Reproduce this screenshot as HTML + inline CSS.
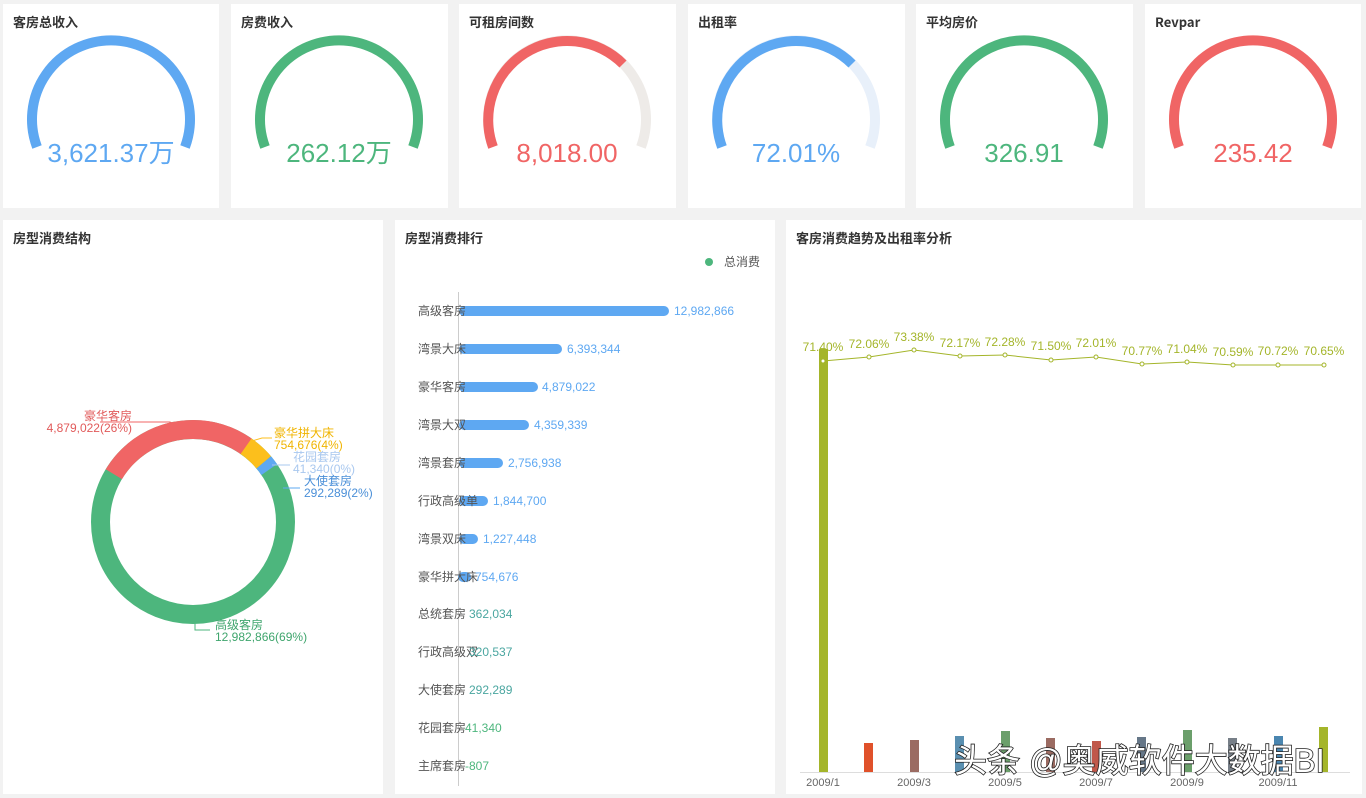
<!DOCTYPE html>
<html><head><meta charset="utf-8"><style>
body{margin:0;width:1366px;height:798px;background:#f2f2f2;font-family:"Liberation Sans","Noto Sans CJK SC",sans-serif;overflow:hidden;position:relative}
.c{position:absolute;background:#fff}
.t{position:absolute;left:10px;top:8px;height:20px;line-height:20px;font-size:13px;font-weight:bold;color:#333;font-family:"Noto Sans CJK SC",sans-serif}
svg{position:absolute;left:0;top:0}
</style></head><body>
<div class="c" style="left:3px;top:4px;width:216px;height:204px"><div class="t">客房总收入</div></div>
<div class="c" style="left:231px;top:4px;width:217px;height:204px"><div class="t">房费收入</div></div>
<div class="c" style="left:459px;top:4px;width:217px;height:204px"><div class="t">可租房间数</div></div>
<div class="c" style="left:688px;top:4px;width:217px;height:204px"><div class="t">出租率</div></div>
<div class="c" style="left:916px;top:4px;width:217px;height:204px"><div class="t">平均房价</div></div>
<div class="c" style="left:1145px;top:4px;width:216px;height:204px"><div class="t">Revpar</div></div>
<div class="c" style="left:3px;top:220px;width:380px;height:574px"><div class="t">房型消费结构</div></div>
<div class="c" style="left:395px;top:220px;width:380px;height:574px"><div class="t">房型消费排行</div></div>
<div class="c" style="left:786px;top:220px;width:576px;height:574px"><div class="t">客房消费趋势及出租率分析</div></div>

<svg width="1366" height="798" font-family="Liberation Sans, Noto Sans CJK SC, sans-serif">
<g fill="none" stroke-width="10">
<path d="M37 147 A79 79 0 1 1 185 147" stroke="#5ea8f2"/>
<path d="M265 147 A79 79 0 1 1 413 147" stroke="#4db67d"/>
<path d="M493 147 A79 79 0 1 1 641 147" stroke="#eeebe8"/>
<path d="M493 147 A79 79 0 0 1 623 64" stroke="#f06565"/>
<path d="M722 147 A79 79 0 1 1 870 147" stroke="#e8f0fa"/>
<path d="M722 147 A79 79 0 0 1 852 64" stroke="#5ea8f2"/>
<path d="M950 147 A79 79 0 1 1 1098 147" stroke="#4db67d"/>
<path d="M1179 147 A79 79 0 1 1 1327 147" stroke="#f06565"/>
</g>
<g font-size="26" text-anchor="middle">
<text x="111" y="162" fill="#5ea8f2">3,621.37万</text>
<text x="339" y="162" fill="#4db67d">262.12万</text>
<text x="567" y="162" fill="#f06565">8,018.00</text>
<text x="796" y="162" fill="#5ea8f2">72.01%</text>
<text x="1024" y="162" fill="#4db67d">326.91</text>
<text x="1253" y="162" fill="#f06565">235.42</text>
</g>

<g transform="rotate(-90 193 522)" fill="none" stroke-width="19">
<circle cx="193" cy="522" r="92.5" stroke="#4db67d"/>
<circle cx="193" cy="522" r="92.5" stroke="#f06565" stroke-dasharray="151 1000" stroke-dashoffset="-486"/>
<circle cx="193" cy="522" r="92.5" stroke="#f06565" stroke-dasharray="57 1000" stroke-dashoffset="0"/>
<circle cx="193" cy="522" r="92.5" stroke="#fcbf1c" stroke-dasharray="24 1000" stroke-dashoffset="-56.5"/>
<circle cx="193" cy="522" r="92.5" stroke="#5ea8f2" stroke-dasharray="9 1000" stroke-dashoffset="-80.5"/>
</g>
<g fill="none" stroke-width="1">
<polyline points="100,422 170,422 175,425" stroke="#f06565"/>
<polyline points="252,441 262,438 272,438" stroke="#fcbf1c"/>
<polyline points="272,465 290,465" stroke="#a9c8ef"/>
<polyline points="283,488 300,488" stroke="#5ea8f2"/>
<polyline points="195,622 195,630 210,630" stroke="#4db67d"/>
</g>
<g font-size="12">
<text x="132" y="420" fill="#e15a5a" text-anchor="end">豪华客房</text>
<text x="132" y="432" fill="#e15a5a" text-anchor="end">4,879,022(26%)</text>
<text x="274" y="437" fill="#f0b400">豪华拼大床</text>
<text x="274" y="449" fill="#f0b400">754,676(4%)</text>
<text x="293" y="461" fill="#a9c8ef">花园套房</text>
<text x="293" y="473" fill="#a9c8ef">41,340(0%)</text>
<text x="304" y="485" fill="#4a8fd8">大使套房</text>
<text x="304" y="497" fill="#4a8fd8">292,289(2%)</text>
<text x="215" y="629" fill="#3fa56d">高级客房</text>
<text x="215" y="641" fill="#3fa56d">12,982,866(69%)</text>
</g>

<circle cx="709" cy="262" r="4" fill="#4db67d"/>
<text x="724" y="266" font-size="12" fill="#555">总消费</text>
<line x1="458.5" y1="292" x2="458.5" y2="786" stroke="#ccc"/>
<g stroke="#5ea8f2" stroke-width="10" stroke-linecap="round">
<line x1="464" y1="311" x2="664" y2="311"/>
<line x1="464" y1="349" x2="557" y2="349"/>
<line x1="464" y1="387" x2="533" y2="387"/>
<line x1="464" y1="425" x2="524" y2="425"/>
<line x1="464" y1="463" x2="498" y2="463"/>
<line x1="464" y1="501" x2="483" y2="501"/>
<line x1="464" y1="539" x2="473" y2="539"/>
<line x1="463" y1="577" x2="466" y2="577"/>
</g>
<g font-size="12" fill="#555">
<text x="418" y="315">高级客房</text><text x="418" y="353">湾景大床</text><text x="418" y="391">豪华客房</text>
<text x="418" y="429">湾景大双</text><text x="418" y="467">湾景套房</text><text x="418" y="505">行政高级单</text>
<text x="418" y="543">湾景双床</text><text x="418" y="581">豪华拼大床</text><text x="418" y="618">总统套房</text>
<text x="418" y="656">行政高级双</text><text x="418" y="694">大使套房</text><text x="418" y="732">花园套房</text>
<text x="418" y="770">主席套房</text>
</g>
<g font-size="12">
<text x="674" y="315" fill="#5ea8f2">12,982,866</text>
<text x="567" y="353" fill="#5ea8f2">6,393,344</text>
<text x="542" y="391" fill="#5ea8f2">4,879,022</text>
<text x="534" y="429" fill="#5ea8f2">4,359,339</text>
<text x="508" y="467" fill="#5ea8f2">2,756,938</text>
<text x="493" y="505" fill="#5ea8f2">1,844,700</text>
<text x="483" y="543" fill="#5ea8f2">1,227,448</text>
<text x="475" y="581" fill="#5ea8f2">754,676</text>
<text x="469" y="618" fill="#4aa6a0">362,034</text>
<text x="469" y="656" fill="#4aa6a0">320,537</text>
<text x="469" y="694" fill="#4aa6a0">292,289</text>
<text x="465" y="732" fill="#4db67d">41,340</text>
<text x="465" y="770" fill="#4db67d">-807</text>
</g>

<line x1="800" y1="772.5" x2="1350" y2="772.5" stroke="#ddd"/>
<g>
<rect x="819" y="349" width="9" height="423" fill="#a4b52a"/>
<rect x="864" y="743" width="9" height="29" fill="#e0512a"/>
<rect x="910" y="740" width="9" height="32" fill="#9b6b62"/>
<rect x="955" y="736" width="9" height="36" fill="#5a8fb0"/>
<rect x="1001" y="731" width="9" height="41" fill="#6b9f6b"/>
<rect x="1046" y="738" width="9" height="34" fill="#9b6b62"/>
<rect x="1092" y="741" width="9" height="31" fill="#c0584a"/>
<rect x="1137" y="737" width="9" height="35" fill="#667788"/>
<rect x="1183" y="730" width="9" height="42" fill="#6b9f6b"/>
<rect x="1228" y="738" width="9" height="34" fill="#777f88"/>
<rect x="1274" y="736" width="9" height="36" fill="#4a86b0"/>
<rect x="1319" y="727" width="9" height="45" fill="#a4b52a"/>
</g>
<polyline fill="none" stroke="#a4b52a" stroke-width="1" points="823,361 869,357 914,350 960,356 1005,355 1051,360 1096,357 1142,364 1187,362 1233,365 1278,365 1324,365"/>
<g fill="#fff" stroke="#a4b52a"><circle cx="823" cy="361" r="2"/><circle cx="869" cy="357" r="2"/><circle cx="914" cy="350" r="2"/><circle cx="960" cy="356" r="2"/><circle cx="1005" cy="355" r="2"/><circle cx="1051" cy="360" r="2"/><circle cx="1096" cy="357" r="2"/><circle cx="1142" cy="364" r="2"/><circle cx="1187" cy="362" r="2"/><circle cx="1233" cy="365" r="2"/><circle cx="1278" cy="365" r="2"/><circle cx="1324" cy="365" r="2"/></g>
<g font-size="12" fill="#a4b52a" text-anchor="middle">
<text x="823" y="351">71.40%</text><text x="869" y="348">72.06%</text><text x="914" y="341">73.38%</text>
<text x="960" y="347">72.17%</text><text x="1005" y="346">72.28%</text><text x="1051" y="350">71.50%</text>
<text x="1096" y="347">72.01%</text><text x="1142" y="355">70.77%</text><text x="1187" y="353">71.04%</text>
<text x="1233" y="356">70.59%</text><text x="1278" y="355">70.72%</text><text x="1324" y="355">70.65%</text>
</g>
<g font-size="11" fill="#666" text-anchor="middle">
<text x="823" y="786">2009/1</text><text x="914" y="786">2009/3</text><text x="1005" y="786">2009/5</text>
<text x="1096" y="786">2009/7</text><text x="1187" y="786">2009/9</text><text x="1278" y="786">2009/11</text>
</g>
<text x="954" y="772" font-size="33" fill="#fff" stroke="#222" stroke-width="1.6" paint-order="stroke">头条 @奥威软件大数据BI</text>
</svg>
</body></html>
